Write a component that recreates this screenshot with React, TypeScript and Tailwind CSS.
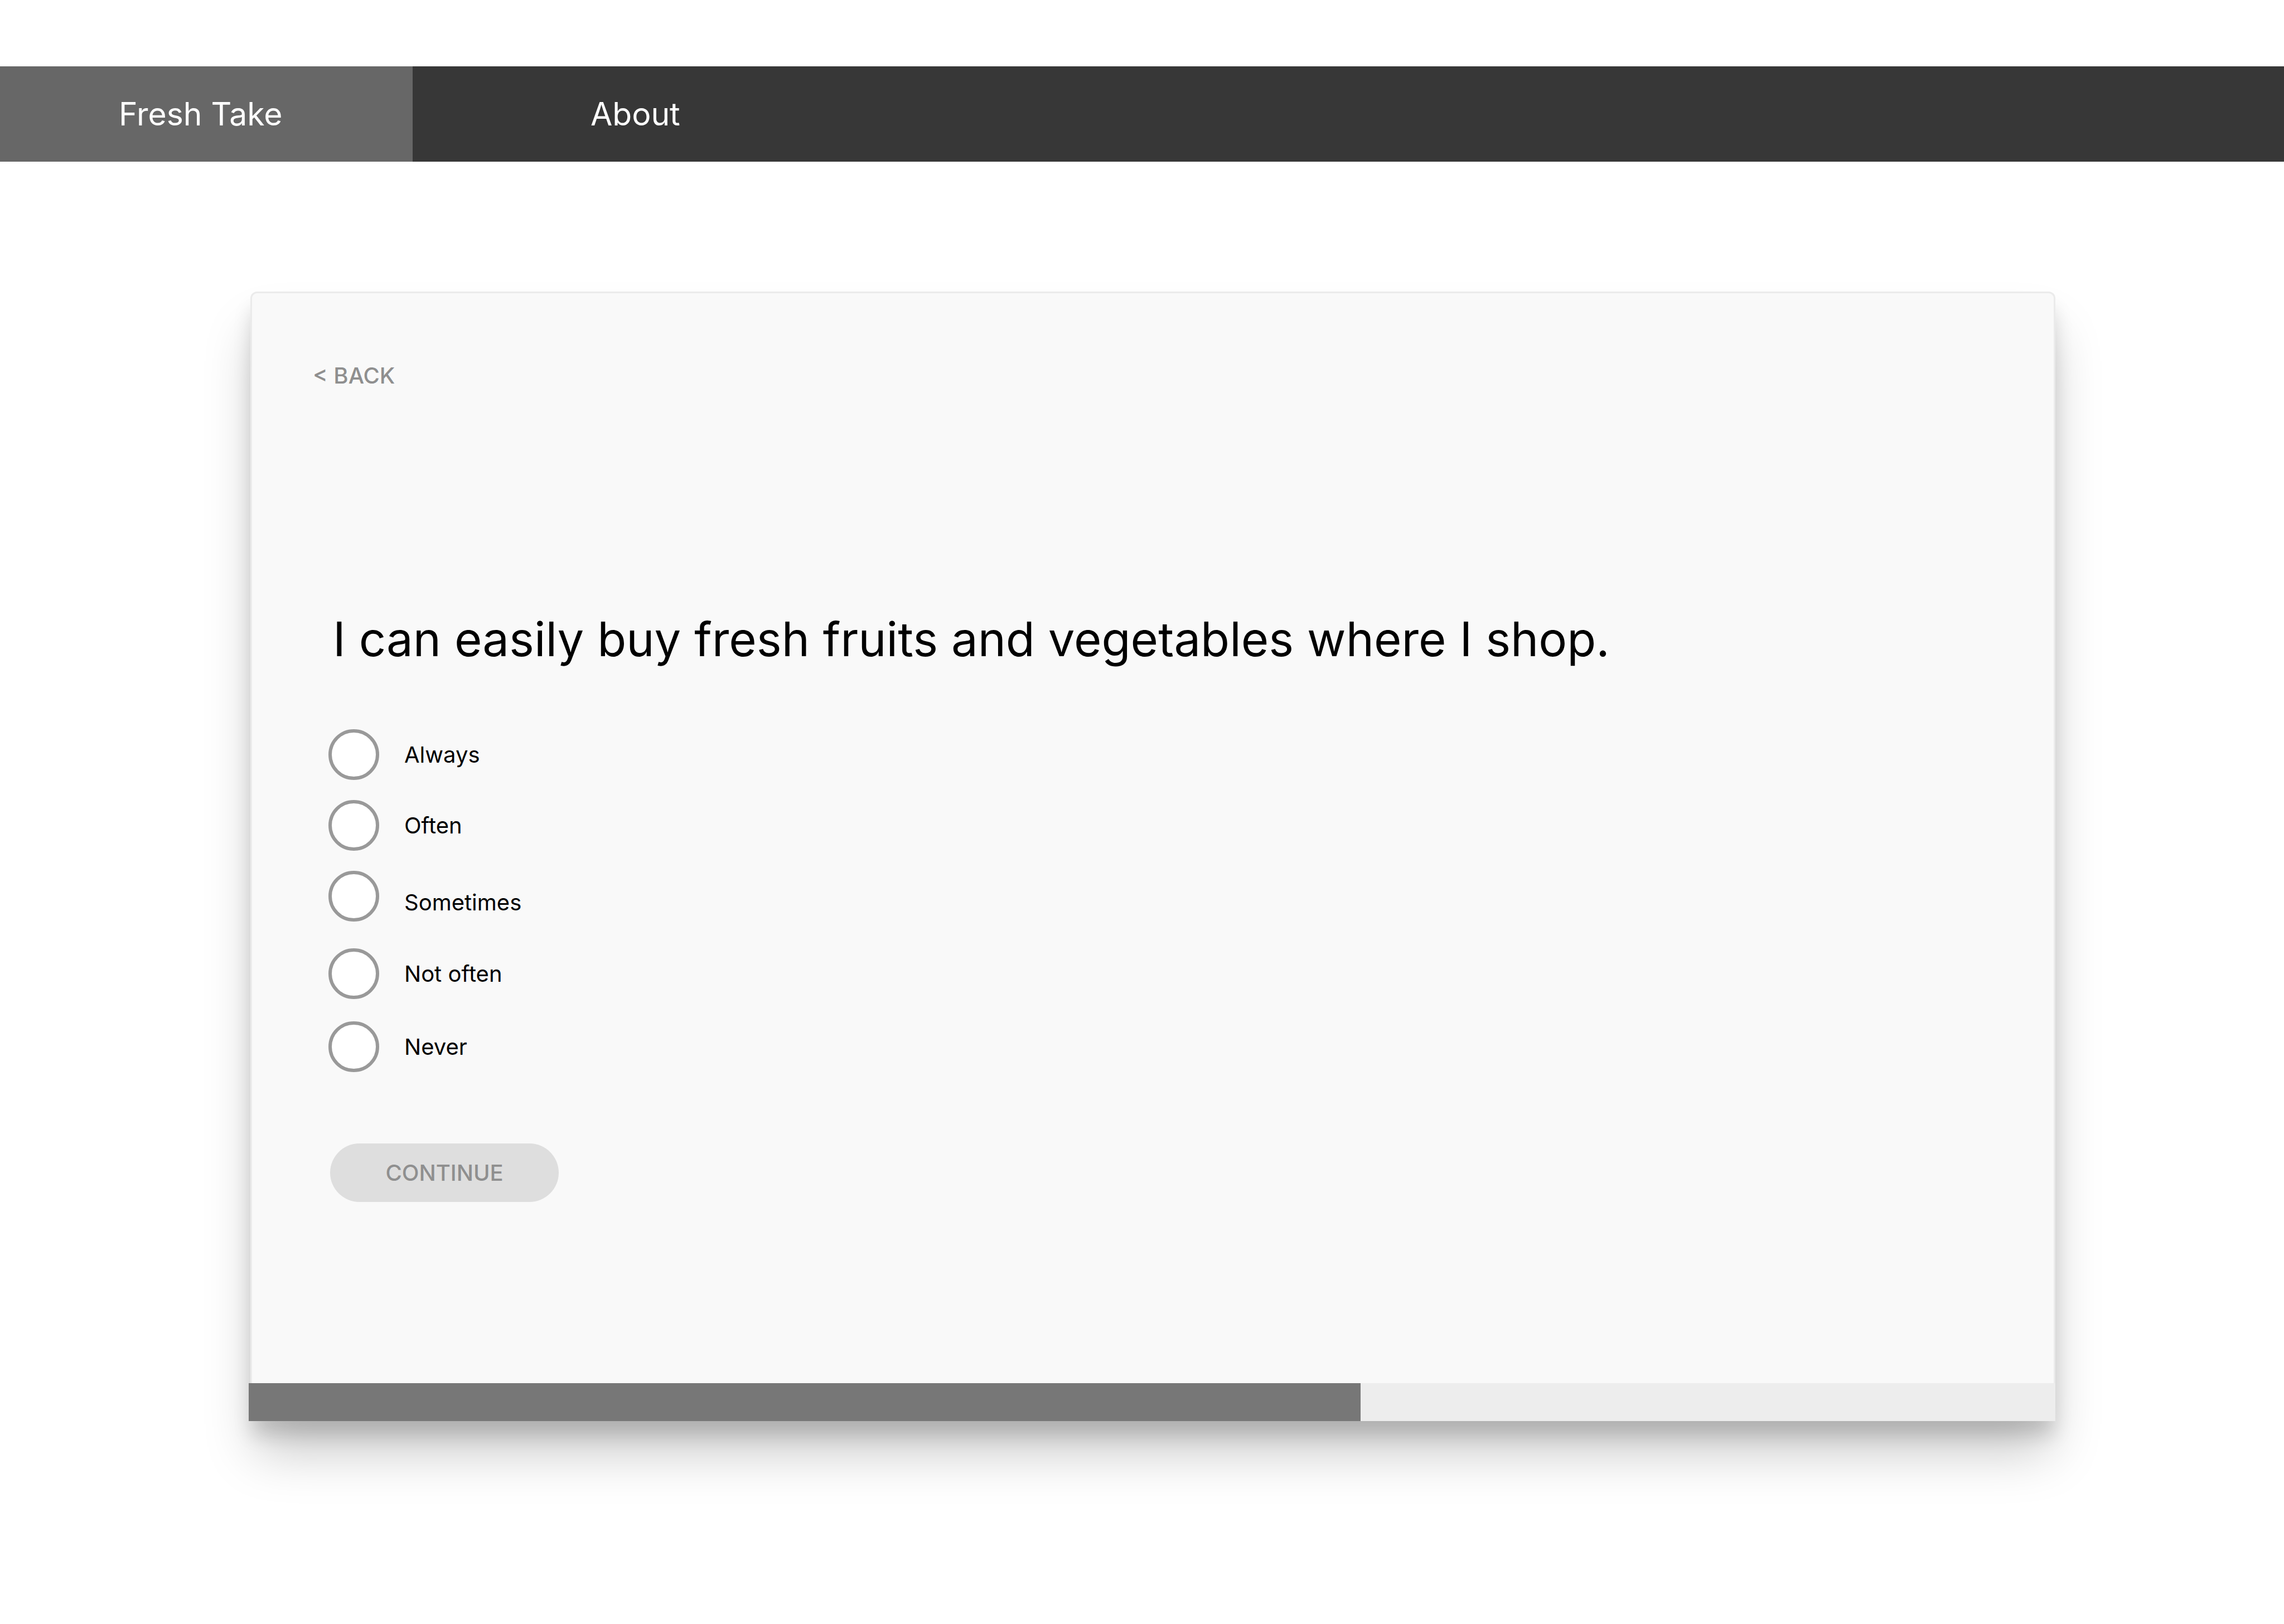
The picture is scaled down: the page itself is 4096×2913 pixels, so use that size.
import { useState } from "react";

const tabs = [
  { label: "Fresh Take", href: "#fresh-take", active: true, className: "w-[740px] bg-[#676767] pl-[213px]" },
  { label: "About", href: "#about", active: false, className: "pl-[319px]" },
];

const options = [
  { value: "always", label: "Always", row: "items-center" },
  { value: "often", label: "Often", row: "mt-9 items-center" },
  { value: "sometimes", label: "Sometimes", row: "mt-9 items-end" },
  { value: "not-often", label: "Not often", row: "mt-12 items-center" },
  { value: "never", label: "Never", row: "mt-10 items-center" },
];

const progress = 61.55;

function NavBar() {
  return (
    <nav className="flex h-[171px] bg-[#373737] text-[57px] text-white">
      {tabs.map((tab) => (
        <a
          key={tab.label}
          href={tab.href}
          aria-current={tab.active ? "page" : undefined}
          className={`flex items-center whitespace-nowrap ${tab.className}`}
        >
          {tab.label}
        </a>
      ))}
    </nav>
  );
}

function ProgressBar({ value }: { value: number }) {
  return (
    <div
      role="progressbar"
      aria-label="Survey progress"
      aria-valuenow={value}
      aria-valuemin={0}
      aria-valuemax={100}
      className="-ml-[3px] h-[68px] bg-[#ededed]"
    >
      <div className="h-full bg-[#777777]" style={{ width: `${value}%` }} />
    </div>
  );
}

export default function App() {
  const [answer, setAnswer] = useState("");

  return (
    <div className="min-h-screen bg-white pt-[119px] font-['Inter',sans-serif] text-black [font-optical-sizing:none]">
      <NavBar />
      <main className="pt-[233px] pr-[410px] pb-[364px] pl-[449px]">
        <section className="rounded-t-xl shadow-[0_28px_34px_-3px_rgba(0,0,0,0.15),0_65px_91px_-9px_rgba(0,0,0,0.21)]">
          <form className="rounded-t-xl border-x-[3px] border-t-[3px] border-[#ebebeb] bg-[#f9f9f9] pt-[124px] pb-[325px]">
            <button
              type="button"
              className="ml-[109px] block text-[40px] leading-[48px] font-medium text-[#8f8f8f]"
            >
              &lt; BACK
            </button>
            <div className="mt-[399px] pl-[137px]">
              <h1 id="question" className="pl-2 text-[85px] leading-[100px]">
                I can easily buy fresh fruits and vegetables where I shop.
              </h1>
              <div role="radiogroup" aria-labelledby="question" className="mt-[111px] flex flex-col items-start">
                {options.map((option) => (
                  <label
                    key={option.value}
                    className={`flex gap-[45px] text-[40px] leading-[68px] ${option.row}`}
                  >
                    <input
                      type="radio"
                      name="answer"
                      value={option.value}
                      checked={answer === option.value}
                      onChange={() => setAnswer(option.value)}
                      className="size-[91px] shrink-0 appearance-none rounded-full border-[6px] border-[#999999] bg-white checked:bg-[#777777]"
                    />
                    {option.label}
                  </label>
                ))}
              </div>
              <button
                type="submit"
                disabled={!answer}
                className="mt-32 ml-[3px] block h-[105px] w-[410px] rounded-full bg-[#dedede] text-[40px] font-medium text-[#8f8f8f]"
              >
                CONTINUE
              </button>
            </div>
          </form>
          <ProgressBar value={progress} />
        </section>
      </main>
    </div>
  );
}
